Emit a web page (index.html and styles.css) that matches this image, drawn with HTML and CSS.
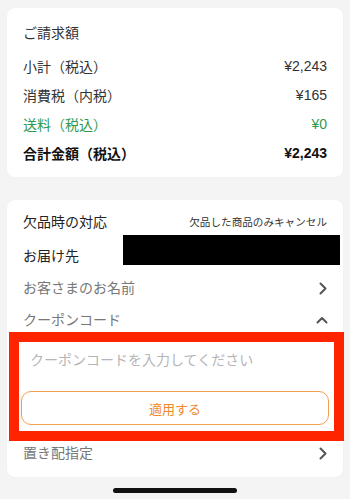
FILE: index.html
```html
<!DOCTYPE html>
<html lang="ja">
<head>
<meta charset="utf-8">
<title>ご請求額</title>
<link rel="stylesheet" href="styles.css">
</head>
<body>
<div class="page">
  <section class="card bill">
    <div class="bill-title">ご請求額</div>
    <div class="bill-row"><span>小計（税込）</span><span>¥2,243</span></div>
    <div class="bill-row"><span>消費税（内税）</span><span>¥165</span></div>
    <div class="bill-row green"><span>送料（税込）</span><span>¥0</span></div>
    <div class="bill-row total"><span>合計金額（税込）</span><span>¥2,243</span></div>
  </section>

  <section class="card opts">
    <div class="opt-row r1"><span class="label">欠品時の対応</span><span class="small">欠品した商品のみキャンセル</span></div>
    <div class="opt-row r2"><span class="label addr">お届け先</span><span class="redact"></span></div>
    <div class="opt-row r3 muted"><span>お客さまのお名前</span>
      <svg class="chev" width="8" height="13" viewBox="0 0 8 13"><path d="M1.5 1.5 L6.5 6.5 L1.5 11.5" fill="none" stroke="#555" stroke-width="2" stroke-linecap="round" stroke-linejoin="round"/></svg>
    </div>
    <div class="opt-row r4 muted"><span>クーポンコード</span>
      <svg class="chev-up" width="12" height="8" viewBox="0 0 12 8"><path d="M1.5 6.5 L6 2 L10.5 6.5" fill="none" stroke="#555" stroke-width="2" stroke-linecap="round" stroke-linejoin="round"/></svg>
    </div>
    <div class="coupon">
      <div class="placeholder">クーポンコードを入力してください</div>
      <div class="apply">適用する</div>
    </div>
    <div class="opt-row r5 muted"><span>置き配指定</span>
      <svg class="chev" width="8" height="13" viewBox="0 0 8 13"><path d="M1.5 1.5 L6.5 6.5 L1.5 11.5" fill="none" stroke="#555" stroke-width="2" stroke-linecap="round" stroke-linejoin="round"/></svg>
    </div>
  </section>

  <div class="home"></div>
</div>
</body>
</html>
```

FILE: styles.css
```css
html, body {
  margin: 0;
  padding: 0;
}
body {
  background: #f4f4f4;
  font-family: "Liberation Sans", "Noto Sans CJK JP", sans-serif;
  color: #333;
  font-size: 14px;
  width: 350px;
  height: 499px;
  overflow: hidden;
}
.page {
  padding: 8px 7px 0 7px;
}
.card {
  background: #fff;
  border-radius: 8px;
  box-shadow: 0 0 2px rgba(0,0,0,0.04);
}
.bill {
  height: 169px;
  box-sizing: border-box;
  padding: 15px 16px 0 16px;
}
.bill-title {
  line-height: 20px;
  margin-bottom: 8px;
}
.bill-row {
  display: flex;
  justify-content: space-between;
  align-items: center;
  height: 29px;
}
.bill-row.green {
  color: #2f9a4f;
}
.bill-row.total {
  font-weight: bold;
  color: #111;
}
.opts {
  margin-top: 23px;
  height: 277px;
  box-sizing: border-box;
  padding-top: 8px;
}
.opt-row {
  display: flex;
  justify-content: space-between;
  align-items: center;
  padding: 0 16px 0 16px;
  line-height: 20px;
}
.r1 { height: 28px; padding-right: 16px; }
.r2 { height: 36px; align-items: flex-start; }
.r3 { height: 32px; }
.r4 { height: 24px; padding-top: 4px; padding-right: 15px; }
.r5 { height: 24px; }
.label { color: #222; }
.addr { padding-top: 10px; }
.small { font-size: 10.6px; color: #333; }
.redact {
  display: block;
  width: 217px;
  height: 30px;
  margin-top: -1px;
  margin-right: -13px;
  background: #000;
}
.muted { color: #777; }
.chev, .chev-up { display: block; }
.coupon {
  margin: 0 -1px 0 2px;
  border: 10px solid #ff2400;
  background: #fff;
  padding: 8px 5px 0 2px;
  box-sizing: content-box;
  height: 81px;
}
.placeholder {
  padding-left: 9px;
  line-height: 20px;
  color: #b5b5b8;
}
.apply {
  margin-top: 21px;
  height: 34px;
  box-sizing: border-box;
  border: 1px solid #f2a050;
  border-radius: 10px;
  display: flex;
  align-items: center;
  justify-content: center;
  color: #ee8a2c;
  font-size: 13px;
}
.home {
  width: 124px;
  height: 5px;
  border-radius: 3px;
  background: #111;
  margin: 11px auto 0;
}
```
